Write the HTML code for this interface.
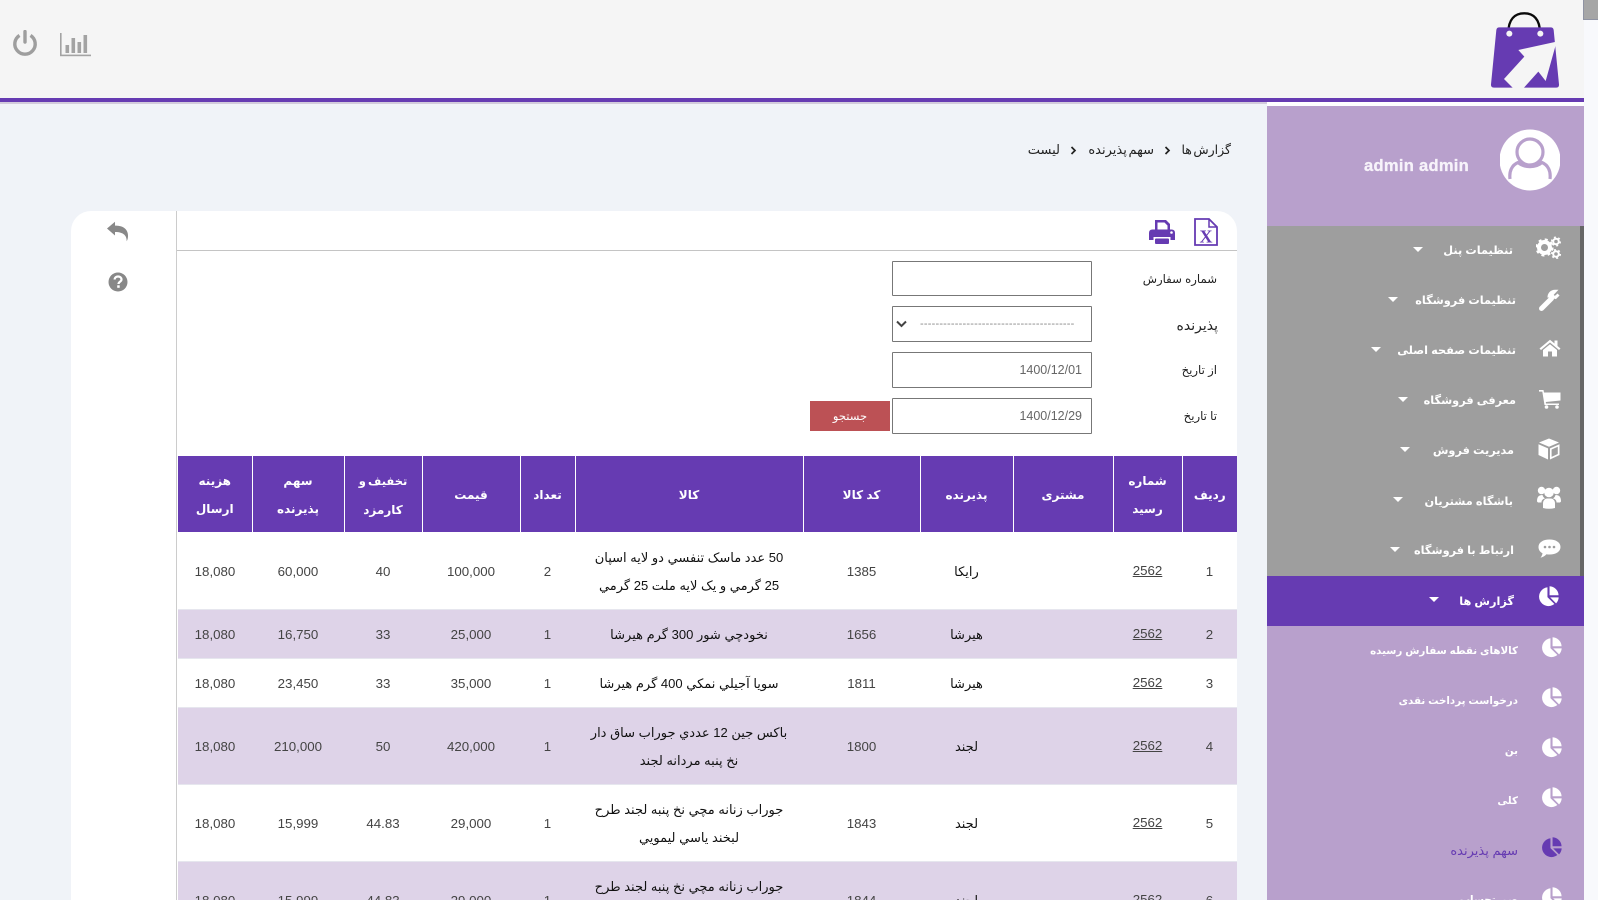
<!DOCTYPE html>
<html lang="fa">
<head>
<meta charset="utf-8">
<title>سهم پذیرنده</title>
<style>
html,body{margin:0;padding:0;width:1598px;height:900px;overflow:hidden;background:#f0f3f8;font-family:"Liberation Sans","DejaVu Sans",sans-serif;}
*{box-sizing:border-box}
#w{position:relative;width:1598px;height:900px;overflow:hidden;background:#f0f3f8}
.a{position:absolute}
.t{position:absolute;white-space:nowrap;direction:rtl;line-height:20px;height:20px}
.m{color:#fff;font-size:11.3px;font-weight:bold}
.s{color:#fff;font-size:10.3px;font-weight:bold}
.tri{position:absolute;width:0;height:0;border-left:5px solid transparent;border-right:5px solid transparent;border-top:5.5px solid #fff}
.l{color:#222;font-size:11.7px}
.inp{position:absolute;left:892px;width:200px;background:#fff;border:1px solid #777;border-radius:1px}
.d{position:absolute;left:892px;width:190px;text-align:right;font-size:12.5px;color:#666;line-height:20px;direction:ltr}
table{position:absolute;left:178px;top:456px;width:1059px;border-collapse:collapse;table-layout:fixed;direction:rtl}
th{background:#663bb2;color:#fff;font-size:12px;font-weight:bold;line-height:28px;border-left:1px solid #fff;padding:2px 0 0;text-align:center}
th:last-child{border-left:0}
td{padding:3px 0 0;text-align:center;font-size:13.3px;color:#444;line-height:28px;border-bottom:1px solid #e6e6ee}
td.x{font-size:13px;color:#111}
tr.o td{background:#ded3e8}
td u{position:relative;top:-1px}
svg{position:absolute;display:block}
</style>
</head>
<body>
<div id="w">
<svg width="0" height="0" style="position:absolute">
<defs>
<symbol id="pie" viewBox="0 0 20 20">
<path fill="currentColor" d="M9 1.2V10.6L15.6 17.2A9 9 0 1 1 9 1.2Z"/>
<path fill="currentColor" d="M11 0.2A9 9 0 0 1 19.6 8.8H11Z"/>
<path fill="currentColor" d="M11.6 10.8H19.7A9.4 9.4 0 0 1 17.2 16.6Z"/>
</symbol>
</defs>
</svg>

<!-- header -->
<div class="a" style="left:0;top:0;width:1584px;height:98px;background:#f5f5f5"></div>
<div class="a" style="left:0;top:98px;width:1584px;height:4px;background:#663bb2"></div>
<div class="a" style="left:0;top:102px;width:1267px;height:2px;background:#d2cbdc"></div>
<div class="a" style="left:1267px;top:102px;width:317px;height:4px;background:#fff"></div>

<!-- power -->
<svg style="left:12px;top:30px" width="26" height="27" viewBox="0 0 26 27" fill="none" stroke="#9e9e9e" stroke-width="3.4">
<path d="M7.5 5.400A10.2 10.2 0 1 0 18.5 5.400"/>
<path d="M13 1.5V12" stroke-linecap="round"/>
</svg>
<!-- chart -->
<svg style="left:59px;top:32px" width="33" height="25" viewBox="0 0 33 25" fill="#a3a3a3">
<rect x="1" y="1" width="1.6" height="23"/><rect x="1" y="22.6" width="31" height="1.6"/>
<rect x="6.5" y="13" width="3.6" height="8"/><rect x="12.5" y="6" width="3.6" height="15"/>
<rect x="18.5" y="10" width="3.6" height="11"/><rect x="24.5" y="3" width="3.6" height="18"/>
</svg>

<!-- logo -->
<svg style="left:1480px;top:5px" width="100" height="95" viewBox="0 0 300 285">
<path d="M85 84C85 42 105 25 133 25C160 25 180 42 180 84" fill="none" stroke="#0a0a0a" stroke-width="7"/>
<path d="M58 67H212Q220 67 221 75L237 238Q238 248 228 248H43Q32 248 33 238L49 75Q50 67 58 67Z" fill="#663bb2"/>
<circle cx="88" cy="86" r="9" fill="#f5f5f5"/><circle cx="181" cy="86" r="9" fill="#f5f5f5"/>
<path d="M230 110L115 135L133 155L72 222L100 250H130L175 200L197 228Z" fill="#f5f5f5"/>
</svg>

<!-- sidebar -->
<div class="a" style="left:1267px;top:106px;width:317px;height:120px;background:#b8a0cc"></div>
<div class="a" style="left:1267px;top:226px;width:317px;height:350px;background:#9e9e9e"></div>
<div class="a" style="left:1580px;top:226px;width:4px;height:350px;background:#666"></div>
<div class="a" style="left:1267px;top:576px;width:317px;height:50px;background:#663bb2"></div>
<div class="a" style="left:1267px;top:626px;width:317px;height:274px;background:#b8a0cc"></div>

<!-- avatar -->
<svg style="left:1500px;top:129px" width="60" height="62" viewBox="0 0 60 62">
<circle cx="30" cy="31" r="30.5" fill="#fff"/>
<circle cx="30" cy="23" r="13" fill="none" stroke="#b8a0cc" stroke-width="3.2"/>
<path d="M10 50C9 42 12 36 18 33.500C24 39 36 39 42 33.500C48 36 51 42 50 50" fill="none" stroke="#b8a0cc" stroke-width="3.2"/>
</svg>
<div class="a" style="left:1364px;top:155px;width:105px;color:#f7f3fa;font-size:16.5px;font-weight:bold;line-height:22px;white-space:nowrap;letter-spacing:.3px;direction:ltr;-webkit-text-stroke:.3px #f7f3fa">admin admin</div>

<!-- menu text -->
<div class="t m" style="right:85px;top:241px">تنظیمات پنل</div><div class="tri" style="left:1413px;top:247px"></div>
<div class="t m" style="right:82px;top:291px">تنظیمات فروشگاه</div><div class="tri" style="left:1388px;top:297px"></div>
<div class="t m" style="right:82px;top:341px">تنظیمات صفحه اصلی</div><div class="tri" style="left:1371px;top:347px"></div>
<div class="t m" style="right:82px;top:391px">معرفی فروشگاه</div><div class="tri" style="left:1398px;top:397px"></div>
<div class="t m" style="right:84px;top:441px">مدیریت فروش</div><div class="tri" style="left:1400px;top:447px"></div>
<div class="t m" style="right:85px;top:492px">باشگاه مشتریان</div><div class="tri" style="left:1393px;top:497px"></div>
<div class="t m" style="right:84px;top:541px">ارتباط با فروشگاه</div><div class="tri" style="left:1390px;top:547px"></div>
<div class="t m" style="right:84px;top:592px">گزارش ها</div><div class="tri" style="left:1429px;top:597px"></div>

<!-- menu icons -->
<svg style="left:1536px;top:236px" width="26" height="24" viewBox="0 0 26 24" fill="none" stroke="#fff">
<circle cx="8.500" cy="11.500" r="5.500" stroke-width="4"/><circle cx="8.500" cy="11.500" r="8" stroke-width="2.200" stroke-dasharray="3 3.280"/>
<circle cx="20" cy="5.500" r="2.800" stroke-width="2"/><circle cx="20" cy="5.500" r="4.300" stroke-width="1.500" stroke-dasharray="2 2.500"/>
<circle cx="20" cy="18" r="2.800" stroke-width="2"/><circle cx="20" cy="18" r="4.300" stroke-width="1.500" stroke-dasharray="2 2.500"/>
</svg>
<svg style="left:1538px;top:289px" width="23" height="23" viewBox="0 0 23 23" fill="none" stroke="#fff">
<path d="M3.500 19.500L13.500 9.500" stroke-width="5" stroke-linecap="round"/>
<path d="M20.500 5.500L17.500 8.500L14.800 7.800L14.200 5.200L17 2.200A6 6 0 0 0 11 8.500" stroke-width="3" fill="#fff"/>
</svg>
<svg style="left:1539px;top:339px" width="22" height="18" viewBox="0 0 22 18" fill="#fff">
<path d="M0.500 9.500L11 0.700L15.500 4.500V1.500H18.500V7L21.500 9.500L20 11L11 3.500L2 11Z"/>
<path d="M4 11L11 5.200L18 11V17.500H13V12.500H9V17.500H4Z"/>
</svg>
<svg style="left:1539px;top:389px" width="22" height="20" viewBox="0 0 22 20" fill="#fff">
<path d="M0 1H4.500L5 3.500H21.500V11.500L6.800 13L7 14.500H20V16H5.500L3.300 2.600H0Z"/>
<circle cx="7.500" cy="18" r="1.800"/><circle cx="18" cy="18" r="1.800"/>
</svg>
<svg style="left:1538px;top:438px" width="22" height="22" viewBox="0 0 22 22" fill="#fff">
<path d="M11 0.500L21 4.500L11 8.800L1 4.500Z"/>
<path d="M0.500 6.300L10 10.400V21.500L0.500 17Z"/>
<path d="M21.500 6.300V17L12 21.500V10.400ZM19.800 8.800L13.600 11.500V18.900L19.800 16Z"/>
</svg>
<svg style="left:1537px;top:486px" width="24" height="23" viewBox="0 0 24 23" fill="#fff">
<circle cx="4.500" cy="4.500" r="3.700"/><circle cx="19.500" cy="4.500" r="3.700"/><circle cx="12" cy="6.500" r="4.800"/>
<path d="M0 15.500C0 10.500 2 9 5.500 9C6 11 7.500 12 8 12.500C5.500 13 4.500 14.500 4.500 16.500H1Z"/>
<path d="M24 15.500C24 10.500 22 9 18.500 9C18 11 16.500 12 16 12.500C18.500 13 19.500 14.500 19.500 16.500H23Z"/>
<path d="M6 22V17.500C6 14 8.500 12.500 10 12.500H14C15.500 12.500 18 14 18 17.500V22Q12 23.500 6 22Z"/>
</svg>
<svg style="left:1538px;top:539px" width="23" height="20" viewBox="0 0 23 20">
<path d="M11.500 0.500C18 0.500 22.500 3.500 22.500 8C22.500 12.500 18 15.500 11.500 15.500C10.500 15.500 9.500 15.400 8.500 15.200C7 16.800 5 18 2.500 18.800C3.500 17.500 4.300 16 4.500 14.300C2 13 0.500 10.800 0.500 8C0.500 3.500 5 0.500 11.500 0.500Z" fill="#fff"/>
<circle cx="7" cy="8" r="1.300" fill="#9e9e9e"/><circle cx="11.500" cy="8" r="1.300" fill="#9e9e9e"/><circle cx="16" cy="8" r="1.300" fill="#9e9e9e"/>
</svg>
<svg style="left:1538px;top:586px;color:#fff" width="21" height="21"><use href="#pie"/></svg>

<!-- submenu -->
<div class="t s" style="right:80px;top:642px">کالاهای نقطه سفارش رسیده</div>
<div class="t s" style="right:80px;top:692px">درخواست پرداخت نقدی</div>
<div class="t s" style="right:80px;top:742px">بن</div>
<div class="t s" style="right:80px;top:792px">کلی</div>
<div class="t s" style="right:80px;top:841px;color:#663bb2;font-weight:normal;font-size:13px">سهم پذیرنده</div>
<div class="t s" style="right:80px;top:891px">صورتحساب</div>
<svg style="left:1541px;top:637px;color:#fff" width="21" height="21"><use href="#pie"/></svg>
<svg style="left:1541px;top:687px;color:#fff" width="21" height="21"><use href="#pie"/></svg>
<svg style="left:1541px;top:737px;color:#fff" width="21" height="21"><use href="#pie"/></svg>
<svg style="left:1541px;top:787px;color:#fff" width="21" height="21"><use href="#pie"/></svg>
<svg style="left:1541px;top:837px;color:#663bb2" width="21" height="21"><use href="#pie"/></svg>
<svg style="left:1541px;top:887px;color:#fff" width="21" height="21"><use href="#pie"/></svg>

<!-- scrollbar -->
<div class="a" style="left:1584px;top:0;width:14px;height:900px;background:#f8f9fc"></div>
<div class="a" style="left:1583px;top:0;width:15px;height:20px;background:#a6a6a6;border-left:1px solid #8f93a3;border-bottom:1px solid #8f93a3"></div>

<!-- breadcrumb -->
<div class="t" style="right:367px;top:140px;font-size:12.5px;color:#222;word-spacing:-2px">گزارش ها</div>
<div class="t" style="right:444px;top:140px;font-size:13px;color:#222;word-spacing:-2px">سهم پذیرنده</div>
<div class="t" style="right:538px;top:140px;font-size:13px;color:#222">لیست</div>
<svg style="left:1164px;top:146px" width="7" height="9" viewBox="0 0 7 9" fill="none" stroke="#222" stroke-width="1.700"><path d="M1.500 1L5 4.500L1.500 8"/></svg>
<svg style="left:1070px;top:146px" width="7" height="9" viewBox="0 0 7 9" fill="none" stroke="#222" stroke-width="1.700"><path d="M1.500 1L5 4.500L1.500 8"/></svg>

<!-- card -->
<div class="a" style="left:71px;top:211px;width:1166px;height:689px;background:#fff;border-radius:20px 20px 0 0"></div>
<div class="a" style="left:176px;top:211px;width:1px;height:689px;background:#ccc"></div>
<div class="a" style="left:177px;top:250px;width:1060px;height:1px;background:#c4c4c4"></div>

<!-- back / help -->
<svg style="left:106px;top:221px" width="23" height="21" viewBox="0 0 23 21" fill="#888">
<path d="M1 7.500L9 0.800V4.600C16 4.600 22 7 22 15C22 17 21.500 18.800 20.700 20.300C20.800 15 18 11 9 11V14.500Z"/>
</svg>
<svg style="left:108px;top:272px" width="20" height="20" viewBox="0 0 20 20">
<circle cx="10" cy="10" r="9.500" fill="#888"/>
<path d="M6.500 7.500C6.800 5.500 8.300 4.500 10 4.500C12 4.500 13.500 5.800 13.500 7.500C13.500 9.800 10.500 9.800 10.500 12" fill="none" stroke="#fff" stroke-width="2.200"/>
<rect x="9.200" y="13.300" width="2.500" height="2.500" fill="#fff"/>
</svg>

<!-- print / xls -->
<svg style="left:1149px;top:219px" width="26" height="26" viewBox="0 0 26 26" fill="#663bb2">
<path d="M6 1H17L21 5V11H18.500V6.500L15.500 3.500H8.500V11H6Z"/>
<path d="M3.500 10.500H22.500Q26 10.500 26 14V21H21.500V18H4.500V21H0V14Q0 10.500 3.500 10.500Z"/>
<rect x="6" y="19.500" width="14" height="5.500" rx="1"/>
<circle cx="22.500" cy="13.500" r="1.300" fill="#fff"/>
</svg>
<svg style="left:1194px;top:218px" width="24" height="28" viewBox="0 0 24 28" fill="none" stroke="#663bb2">
<path d="M1 1H15L23 9V27H1Z" stroke-width="1.800"/>
<path d="M15 1V9H23" stroke-width="1.500"/>
<text x="12" y="24.500" text-anchor="middle" font-family="Liberation Serif,serif" font-size="18" font-weight="bold" fill="#663bb2" stroke="none">X</text>
</svg>

<!-- form -->
<div class="t l" style="right:381px;top:270px">شماره سفارش</div>
<div class="t l" style="right:380px;top:315px;font-size:14px">پذیرنده</div>
<div class="t l" style="right:381px;top:361px">از تاریخ</div>
<div class="t l" style="right:381px;top:407px">تا تاریخ</div>
<div class="inp" style="top:261px;height:35px"></div>
<div class="inp" style="top:306px;height:36px"></div>
<svg style="left:896px;top:320px" width="11" height="8" viewBox="0 0 11 8" fill="none" stroke="#444" stroke-width="2"><path d="M1 1.500L5.500 6L10 1.500"/></svg>
<div class="a" style="left:920px;top:314px;width:158px;overflow:hidden;white-space:nowrap;font-size:11px;line-height:20px;color:#888;letter-spacing:.2px">----------------------------------------</div>
<div class="inp" style="top:352px;height:36px"></div>
<div class="d" style="top:360px">1400/12/01</div>
<div class="inp" style="top:398px;height:36px"></div>
<div class="d" style="top:406px">1400/12/29</div>
<div class="a" style="left:810px;top:401px;width:80px;height:30px;background:#bc5155;color:#fff;font-size:11.5px;text-align:center;line-height:32px;direction:rtl">جستجو</div>

<!-- table -->
<table>
<colgroup>
<col style="width:55px"><col style="width:69px"><col style="width:100px"><col style="width:93px"><col style="width:117px"><col style="width:228px"><col style="width:55px"><col style="width:98px"><col style="width:78px"><col style="width:92px"><col style="width:74px">
</colgroup>
<tr style="height:76px">
<th>ردیف</th><th>شماره<br>رسید</th><th>مشتری</th><th>پذیرنده</th><th>کد کالا</th><th>کالا</th><th>تعداد</th><th>قیمت</th><th><span style="word-spacing:-1px;font-size:11.5px">تخفیف و</span><br>کارمزد</th><th>سهم<br>پذیرنده</th><th>هزینه<br>ارسال</th>
</tr>
<tr style="height:77px">
<td>1</td><td><u>2562</u></td><td></td><td class="x">رایکا</td><td>1385</td><td class="x">50 عدد ماسک تنفسي دو لايه اسپان<br>25 گرمي و يک لايه ملت 25 گرمي</td><td>2</td><td>100,000</td><td>40</td><td>60,000</td><td>18,080</td>
</tr>
<tr class="o" style="height:49px">
<td>2</td><td><u>2562</u></td><td></td><td class="x">هیرشا</td><td>1656</td><td class="x">نخودچي شور 300 گرم هيرشا</td><td>1</td><td>25,000</td><td>33</td><td>16,750</td><td>18,080</td>
</tr>
<tr style="height:49px">
<td>3</td><td><u>2562</u></td><td></td><td class="x">هیرشا</td><td>1811</td><td class="x">سويا آجيلي نمکي 400 گرم هيرشا</td><td>1</td><td>35,000</td><td>33</td><td>23,450</td><td>18,080</td>
</tr>
<tr class="o" style="height:77px">
<td>4</td><td><u>2562</u></td><td></td><td class="x">لجند</td><td>1800</td><td class="x">باکس جين 12 عددي جوراب ساق دار<br>نخ پنبه مردانه لجند</td><td>1</td><td>420,000</td><td>50</td><td>210,000</td><td>18,080</td>
</tr>
<tr style="height:77px">
<td>5</td><td><u>2562</u></td><td></td><td class="x">لجند</td><td>1843</td><td class="x">جوراب زنانه مچي نخ پنبه لجند طرح<br>لبخند ياسي ليمويي</td><td>1</td><td>29,000</td><td>44.83</td><td>15,999</td><td>18,080</td>
</tr>
<tr class="o" style="height:77px">
<td>6</td><td><u>2562</u></td><td></td><td class="x">لجند</td><td>1844</td><td class="x">جوراب زنانه مچي نخ پنبه لجند طرح<br>لبخند ياسي ليمويي</td><td>1</td><td>29,000</td><td>44.83</td><td>15,999</td><td>18,080</td>
</tr>
</table>
</div>
</body>
</html>
